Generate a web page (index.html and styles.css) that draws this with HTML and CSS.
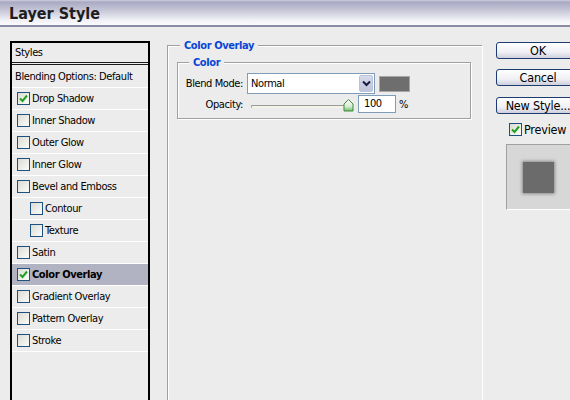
FILE: index.html
```html
<!DOCTYPE html>
<html lang="en">
<head>
    <meta charset="UTF-8">
    <title>Layer Style</title>
    <link rel="stylesheet" href="styles.css">
</head>
<body>
    <div class="titlebar">Layer Style</div>

    <div class="dialog">
        <div class="styles-list">
            <div class="list-head">Styles</div>
            <div class="list-item">Blending Options: Default</div>
            <div class="list-item"><span class="check"><svg viewBox="0 0 11 11"><polyline points="2,5.5 4.5,8 9,2.5"/></svg></span>Drop Shadow</div>
            <div class="list-item"><span class="check"></span>Inner Shadow</div>
            <div class="list-item"><span class="check"></span>Outer Glow</div>
            <div class="list-item"><span class="check"></span>Inner Glow</div>
            <div class="list-item"><span class="check"></span>Bevel and Emboss</div>
            <div class="list-item sub"><span class="check"></span>Contour</div>
            <div class="list-item sub"><span class="check"></span>Texture</div>
            <div class="list-item"><span class="check"></span>Satin</div>
            <div class="list-item selected"><span class="check"><svg viewBox="0 0 11 11"><polyline points="2,5.5 4.5,8 9,2.5"/></svg></span>Color Overlay</div>
            <div class="list-item"><span class="check"></span>Gradient Overlay</div>
            <div class="list-item"><span class="check"></span>Pattern Overlay</div>
            <div class="list-item"><span class="check"></span>Stroke</div>
        </div>

        <div class="panel">
            <div class="group outer">
                <div class="group-title">Color Overlay</div>
                <div class="group inner">
                    <div class="group-title">Color</div>
                    <div class="fields">
                        <span class="label">Blend Mode:</span>
                        <div class="field-row">
                            <div class="select">
                                <span class="select-value">Normal</span>
                                <span class="select-btn"><svg viewBox="0 0 9 7"><polyline points="1,1.5 4.5,5 8,1.5"/></svg></span>
                            </div>
                            <span class="swatch"></span>
                        </div>
                        <span class="label">Opacity:</span>
                        <div class="field-row">
                            <div class="slider">
                                <span class="track"></span>
                                <svg class="thumb" viewBox="0 0 11 13">
                                    <defs>
                                        <linearGradient id="tg" x1="0" y1="0" x2="0" y2="1">
                                            <stop offset="0" stop-color="#ffffff"/>
                                            <stop offset="0.6" stop-color="#d9ecd6"/>
                                            <stop offset="1" stop-color="#6fbf6a"/>
                                        </linearGradient>
                                    </defs>
                                    <polygon points="1,5 5.5,0.5 10,5 10,12 1,12" fill="url(#tg)" stroke="#3f8b3a"/>
                                </svg>
                            </div>
                            <span class="num-input">100</span>
                            <span class="unit">%</span>
                        </div>
                    </div>
                </div>
            </div>
        </div>

        <div class="side">
            <div class="btn">OK</div>
            <div class="btn">Cancel</div>
            <div class="btn">New Style...</div>
            <div class="preview-check"><span class="check"><svg viewBox="0 0 11 11"><polyline points="2,5.5 4.5,8 9,2.5"/></svg></span>Preview</div>
            <div class="preview-box">
                <span class="preview-square"></span>
            </div>
        </div>
    </div>
</body>
</html>
```

FILE: styles.css
```css
body {
    margin: 0;
    width: 570px;
    height: 400px;
    overflow: hidden;
    background-color: #ececec;
    font-family: "DejaVu Sans Condensed", "DejaVu Sans", sans-serif;
    font-size: 11px;
    letter-spacing: -0.4px;
    color: #000;
}
.titlebar {
    height: 25px;
    line-height: 27px;
    padding-left: 9px;
    font-size: 16px;
    font-weight: bold;
    letter-spacing: 0;
    color: #1e1e1e;
    background: linear-gradient(#cfcfde 0, #a9a9c3 2px, #c9c9da 11px, #f0f0f6 20px, #fbfbfd 25px);
    border-bottom: 2px solid #8a8aa4;
}
.dialog {
    display: flex;
    height: 373px;
}

/* left list */
.styles-list {
    flex-shrink: 0;
    width: 136px;
    margin: 14px 0 0 10px;
    border: 2px solid #000;
    border-bottom: none;
}
.list-head {
    height: 19px;
    line-height: 19px;
    padding-left: 3px;
    border-bottom: 3px double #1a1a1a;
}
.list-item {
    display: flex;
    align-items: center;
    height: 21px;
    padding-left: 3px;
    border-bottom: 1px solid #fff;
    white-space: nowrap;
}
.list-item:nth-child(2) {
    height: 22px;
}
.list-item .check {
    margin-left: 2px;
}
.list-item.sub .check {
    margin-left: 15px;
}
.list-item.selected {
    background-color: #b1b3c3;
    font-weight: bold;
}
.check {
    display: inline-flex;
    align-items: center;
    justify-content: center;
    flex-shrink: 0;
    width: 11px;
    height: 11px;
    margin-right: 2px;
    border: 1px solid #1c5180;
    background: linear-gradient(135deg, #dcdcd6, #fbfbf8);
}
.check svg {
    width: 11px;
    height: 11px;
    fill: none;
    stroke: #21a121;
    stroke-width: 2;
}

/* middle panel */
.panel {
    flex-shrink: 0;
    margin-left: 17px;
    padding-top: 18px;
}
.group {
    border: 1px solid #a0a0a0;
    box-shadow: inset 1px 1px 0 #fff, 1px 1px 0 #fff;
}
.group-title {
    display: table;
    margin: -7px 0 0 8px;
    padding: 0 4px;
    line-height: 13px;
    background-color: #ececec;
    color: #0a46d6;
    font-weight: bold;
}
.outer {
    width: 294px;
    height: 400px;
    padding: 0 11px 0 9px;
    border-right: none;
}
.outer > .group-title {
    margin-left: 3px;
}
.inner {
    margin-top: 10px;
    height: 55px;
}
.inner > .group-title {
    margin-left: 11px;
}
.fields {
    display: grid;
    grid-template-columns: 65px auto;
    column-gap: 4px;
    row-gap: 1px;
    align-items: center;
    margin-top: 4px;
}
.label {
    text-align: right;
}
.field-row {
    display: flex;
    align-items: center;
}
.select {
    display: flex;
    align-items: center;
    justify-content: space-between;
    box-sizing: border-box;
    width: 128px;
    height: 21px;
    border: 1px solid #7f9db9;
    background-color: #fff;
}
.select-value {
    padding-left: 3px;
}
.select-btn {
    display: flex;
    align-items: center;
    justify-content: center;
    width: 14px;
    height: 17px;
    margin-right: 1px;
    border: 1px solid #b9c3d9;
    border-radius: 2px;
    box-sizing: border-box;
    background: linear-gradient(#d6daea, #bfc5d8);
}
.select-btn svg {
    width: 9px;
    height: 7px;
    fill: none;
    stroke: #1a1a40;
    stroke-width: 2;
}
.swatch {
    box-sizing: border-box;
    width: 31px;
    height: 16px;
    margin-left: 4px;
    border: 1px solid #a6a6a6;
    background-color: #6e6e6e;
}
.slider {
    position: relative;
    width: 101px;
    height: 18px;
    margin-left: 4px;
}
.track {
    display: block;
    margin-top: 10px;
    height: 2px;
    border-top: 1px solid #9a9a9a;
    border-left: 1px solid #9a9a9a;
    border-radius: 2px 0 0 2px;
    background-color: #f3f3e6;
}
.thumb {
    position: absolute;
    left: 92px;
    top: 4px;
    width: 11px;
    height: 13px;
}
.num-input {
    box-sizing: border-box;
    width: 38px;
    height: 18px;
    line-height: 16px;
    margin-left: 6px;
    padding-left: 5px;
    border: 1px solid #7f9db9;
    background-color: #fff;
}
.unit {
    margin-left: 3px;
}

/* right column */
.side {
    width: 84px;
    margin-left: 14px;
    padding-top: 15px;
    flex-shrink: 0;
}
.btn {
    box-sizing: border-box;
    height: 17px;
    line-height: 15px;
    margin-bottom: 10px;
    text-align: center;
    font-size: 12.5px;
    letter-spacing: -0.2px;
    border: 1px solid #1c3c70;
    border-radius: 3px;
    background: linear-gradient(#ffffff, #f0f0f5 60%, #cfcfde);
    white-space: nowrap;
}
.btn:nth-child(2) {
    margin-bottom: 11px;
}
.btn:nth-child(3) {
    margin-bottom: 9px;
}
.preview-check {
    display: flex;
    align-items: center;
    height: 13px;
    margin-left: 13px;
    font-size: 12.5px;
    letter-spacing: -0.2px;
    white-space: nowrap;
}
.preview-box {
    box-sizing: border-box;
    height: 66px;
    margin: 8px 0 0 10px;
    padding: 17px 0 0 16px;
    border-top: 1px solid #a0a0a0;
    border-left: 1px solid #a0a0a0;
    border-bottom: 1px solid #fff;
    background-color: #d7d7d7;
}
.preview-square {
    display: block;
    width: 31px;
    height: 31px;
    background-color: #6b6b6b;
    box-shadow: 0 0 3px 1px rgba(0,0,0,0.35);
}
```
